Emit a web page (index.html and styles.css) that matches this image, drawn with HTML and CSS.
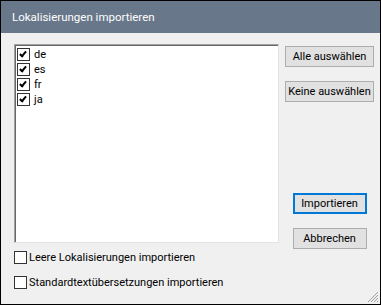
FILE: index.html
```html
<!DOCTYPE html>
<html lang="de">
<head>
    <meta charset="UTF-8">
    <title>Lokalisierungen importieren</title>
    <link rel="stylesheet" href="styles.css">
</head>
<body>
    <div class="dialog">
        <div class="titlebar">Lokalisierungen importieren</div>

        <div class="content">
            <div class="left">
                <div class="listbox">
                    <div class="item"><span class="box checked"></span>de</div>
                    <div class="item"><span class="box checked"></span>es</div>
                    <div class="item"><span class="box checked"></span>fr</div>
                    <div class="item"><span class="box checked"></span>ja</div>
                </div>
                <label class="option first"><span class="box"></span>Leere Lokalisierungen importieren</label>
                <label class="option"><span class="box"></span>Standardtextübersetzungen importieren</label>
            </div>

            <div class="right">
                <button class="btn wide">Alle auswählen</button>
                <button class="btn wide">Keine auswählen</button>
                <div class="spacer"></div>
                <button class="btn default">Importieren</button>
                <button class="btn">Abbrechen</button>
            </div>
        </div>

        <!-- Größenänderungsgriff -->
        <svg class="grip" width="12" height="12" viewBox="0 0 12 12">
            <path d="M11 1 L1 11 M11 4 L4 11 M11 7 L7 11 M11 10 L10 11" stroke="#a0a0a0" stroke-width="1"/>
        </svg>
    </div>
</body>
</html>
```

FILE: styles.css
```css
body {
    margin: 0;
    font-family: 'Roboto', sans-serif;
    font-size: 11px;
    color: #000;
}

.dialog {
    position: relative;
    width: 381px;
    height: 305px;
    box-sizing: border-box;
    border: 1px solid #000;
    background-color: #f0f0f0;
    display: flex;
    flex-direction: column;
}

.titlebar {
    height: 32px;
    background-color: #687789;
    color: #fff;
    padding-left: 11px;
    line-height: 32px;
    font-size: 11.5px;
}

.content {
    flex: 1;
    display: flex;
    padding: 11px 7px 0 13px;
}

.left {
    display: flex;
    flex-direction: column;
}

.listbox {
    width: 261px;
    height: 195px;
    background-color: #fff;
    border: 1px solid #e3e3e3;
    border-top-color: #a0a0a0;
    border-left-color: #a0a0a0;
    box-shadow: inset 1px 1px 0 #696969;
    padding: 2px 0 0 2px;
}

.item {
    height: 15px;
    line-height: 13px;
    display: flex;
    align-items: center;
    gap: 4px;
}

.box {
    width: 11px;
    height: 11px;
    border: 1px solid #333;
    background-color: #fff;
    display: inline-block;
    position: relative;
    flex-shrink: 0;
}

.box.checked::after {
    content: "";
    position: absolute;
    left: 3px;
    top: 1px;
    width: 2px;
    height: 5px;
    border-right: 2px solid #000;
    border-bottom: 2px solid #000;
    transform: rotate(40deg);
}

.option {
    display: flex;
    align-items: center;
    gap: 2px;
    margin-top: 12px;
    height: 13px;
    line-height: 13px;
}

.option.first {
    margin-top: 8px;
}

.right {
    display: flex;
    flex-direction: column;
    align-items: center;
    width: 89px;
    margin-left: 6px;
    padding-top: 2px;
}

.btn {
    font-family: inherit;
    font-size: 11px;
    width: 74px;
    height: 21px;
    padding: 0;
    background-color: #e1e1e1;
    border: 1px solid #adadad;
    color: #000;
    margin-bottom: 14px;
    white-space: nowrap;
}

.btn.wide {
    width: 89px;
}

.btn.default {
    border: 2px solid #0078d7;
}

.spacer {
    height: 77px;
}

.grip {
    position: absolute;
    right: 1px;
    bottom: 1px;
}
```
